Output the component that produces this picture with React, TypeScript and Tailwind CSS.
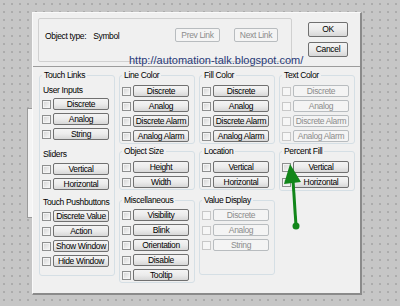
import type { ReactNode } from "react";

const font = "font-['Liberation_Sans',Arial,sans-serif]";

function Check({ disabled }: { disabled?: boolean }) {
  return (
    <span
      className={`block h-[9px] w-[9px] shrink-0 border ${
        disabled
          ? "border-[#c8c8c8] bg-[#f6f6f6]"
          : "border-[#8e8f8f] bg-gradient-to-br from-[#d4d4d4] to-[#f9f9f9] shadow-[inset_0_0_0_1px_#f4f4f4]"
      }`}
    />
  );
}

function Btn({
  label,
  disabled,
  className = "w-[56px] h-[12px]",
}: {
  label: string;
  disabled?: boolean;
  className?: string;
}) {
  return (
    <button
      type="button"
      className={`flex shrink-0 items-center justify-center rounded-[2px] border text-[8.5px] leading-none tracking-[-0.35px] ${className} ${
        disabled
          ? "border-[#b8bcbf] bg-[#f4f4f4] text-[#8c8c8c]"
          : "border-[#707070] bg-gradient-to-b from-[#f4f4f4] via-[#ececec] to-[#d7d7d7] text-black"
      }`}
    >
      {label}
    </button>
  );
}

function Rows({
  items,
  disabled,
  className = "mt-[5px]",
}: {
  items: string[];
  disabled?: boolean;
  className?: string;
}) {
  return (
    <div className={`flex flex-col gap-[3px] ${className}`}>
      {items.map((label) => (
        <div key={label} className="flex items-center gap-[2px]">
          <Check disabled={disabled} />
          <Btn label={label} disabled={disabled} />
        </div>
      ))}
    </div>
  );
}

function Group({
  title,
  className = "",
  children,
}: {
  title: string;
  className?: string;
  children: ReactNode;
}) {
  return (
    <fieldset
      className={`w-[76px] rounded-[3px] border border-[#d5dfe5] pl-[2px] ${className}`}
    >
      <legend className="px-[2px] text-[8.5px] leading-[10px] tracking-[-0.35px]">
        {title}
      </legend>
      {children}
    </fieldset>
  );
}

function Label({ text, className }: { text: string; className: string }) {
  return (
    <div className={`pl-[1px] text-[8.5px] leading-[10px] tracking-[-0.35px] ${className}`}>
      {text}
    </div>
  );
}

export default function App() {
  return (
    <div
      className={`relative h-[306px] w-[400px] overflow-hidden bg-[#c6c6c6] bg-[radial-gradient(circle,#8e8e8e_0.6px,transparent_0.8px)] bg-size-[8px_8px] pt-[12px] pl-[32px] text-black ${font}`}
    >
      {/* window peeking out behind the dialog */}
      <div className="absolute left-[27px] top-[108px] h-[110px] w-[6px] border-y border-l border-[#9a9a9a] bg-[#f4f4f4]" />

      <div className="relative h-[283px] w-[330px] border-t border-l border-r-2 border-b-2 border-t-[#fafafa] border-l-[#fafafa] border-r-[#8a8a8a] border-b-[#8a8a8a] bg-[#f0f0f0]">
        <div className="flex h-[54px] border-b border-[#9c9c9c] pl-[5px] pt-[5px]">
          <div className="flex h-[44px] w-[254px] items-start rounded-[2px] border border-[#d0d0d0] pl-[6px] pr-[13px] pt-[9px]">
            <div className="flex h-[16px] items-center text-[8.5px] tracking-[-0.35px]">
              <span>Object type:</span>
              <span className="ml-[7px]">Symbol</span>
            </div>
            <Btn label="Prev Link" disabled className="ml-auto h-[14px] w-[45px]" />
            <Btn label="Next Link" disabled className="ml-[14px] h-[14px] w-[44px]" />
          </div>
          <div className="ml-[16px] flex flex-col gap-[5px] pt-[4px]">
            <Btn label="OK" className="h-[15px] w-[40px]" />
            <Btn label="Cancel" className="h-[15px] w-[40px]" />
          </div>
        </div>

        <div className="flex items-start gap-[4px] pl-[6px] pt-[3px]">
          <Group title="Touch Links" className="pb-[8px]">
            <Label text="User Inputs" className="mt-[5px]" />
            <Rows items={["Discrete", "Analog", "String"]} className="mt-[3px]" />
            <Label text="Sliders" className="mt-[9px]" />
            <Rows items={["Vertical", "Horizontal"]} className="mt-[4px]" />
            <Label text="Touch Pushbuttons" className="mt-[7px]" />
            <Rows
              items={["Discrete Value", "Action", "Show Window", "Hide Window"]}
              className="mt-[3px]"
            />
          </Group>

          <div className="flex flex-col">
            <Group title="Line Color" className="pb-[1px]">
              <Rows items={["Discrete", "Analog", "Discrete Alarm", "Analog Alarm"]} />
            </Group>
            <Group title="Object Size" className="mt-[2px] pb-[1px]">
              <Rows items={["Height", "Width"]} />
            </Group>
            <Group title="Miscellaneous" className="mt-[5px] pb-[1px]">
              <Rows
                items={["Visibility", "Blink", "Orientation", "Disable", "Tooltip"]}
                className="mt-[4px]"
              />
            </Group>
          </div>

          <div className="flex flex-col">
            <Group title="Fill Color" className="pb-[1px]">
              <Rows items={["Discrete", "Analog", "Discrete Alarm", "Analog Alarm"]} />
            </Group>
            <Group title="Location" className="mt-[2px] pb-[1px]">
              <Rows items={["Vertical", "Horizontal"]} />
            </Group>
            <Group title="Value Display" className="mt-[5px] pb-[23px]">
              <Rows items={["Discrete", "Analog", "String"]} disabled className="mt-[4px]" />
            </Group>
          </div>

          <div className="flex flex-col">
            <Group title="Text Color" className="pb-[1px]">
              <Rows
                items={["Discrete", "Analog", "Discrete Alarm", "Analog Alarm"]}
                disabled
              />
            </Group>
            <Group title="Percent Fill" className="mt-[2px] pb-[2px]">
              <Rows items={["Vertical", "Horizontal"]} />
            </Group>
          </div>
        </div>

        <div className="absolute left-[96px] top-[42px] text-[11px] leading-[11px] text-[#283a78]">
          http://automation-talk.blogspot.com/
        </div>
      </div>

      {/* green annotation arrow */}
      <svg className="pointer-events-none absolute inset-0" width="400" height="306">
        <line x1="296" y1="226" x2="293" y2="180" stroke="#12861a" strokeWidth="3" />
        <polygon points="290,164 284,184 301,182" fill="#12861a" />
        <circle cx="296" cy="226" r="3.5" fill="#12861a" />
      </svg>
    </div>
  );
}
